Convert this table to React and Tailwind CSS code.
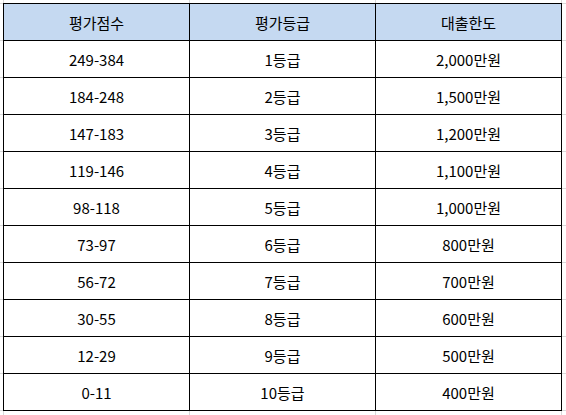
const rows = [
  ["249-384", "1등급", "2,000만원"],
  ["184-248", "2등급", "1,500만원"],
  ["147-183", "3등급", "1,200만원"],
  ["119-146", "4등급", "1,100만원"],
  ["98-118", "5등급", "1,000만원"],
  ["73-97", "6등급", "800만원"],
  ["56-72", "7등급", "700만원"],
  ["30-55", "8등급", "600만원"],
  ["12-29", "9등급", "500만원"],
  ["0-11", "10등급", "400만원"],
];

const header = ["평가점수", "평가등급", "대출한도"];

export default function App() {
  return (
    <div
      className="w-[566px] h-[415px] overflow-hidden bg-white bg-[linear-gradient(to_right,#d9d9d9_1px,transparent_1px),linear-gradient(to_bottom,#d9d9d9_1px,transparent_1px)] bg-[size:186px_37px] bg-[position:3px_3px] pt-[3px] pl-[3px] text-black font-normal"
      style={{ fontFamily: '"Noto Sans CJK KR", "Noto Sans", sans-serif' }}
    >
      <div className="w-[559px] border-t border-l border-black bg-white grid grid-cols-[186px_186px_186px]">
        {header.map((h) => (
          <div
            key={h}
            className="h-[37px] border-r border-b border-black bg-[#c5d9f1] flex items-center justify-center text-[15px] leading-none"
          >
            {h}
          </div>
        ))}
        {rows.map((r, i) =>
          r.map((c, j) => (
            <div
              key={i + "-" + j}
              className="h-[37px] border-r border-b border-black flex items-center justify-center text-[15px] leading-none"
            >
              {c}
            </div>
          ))
        )}
      </div>
    </div>
  );
}
